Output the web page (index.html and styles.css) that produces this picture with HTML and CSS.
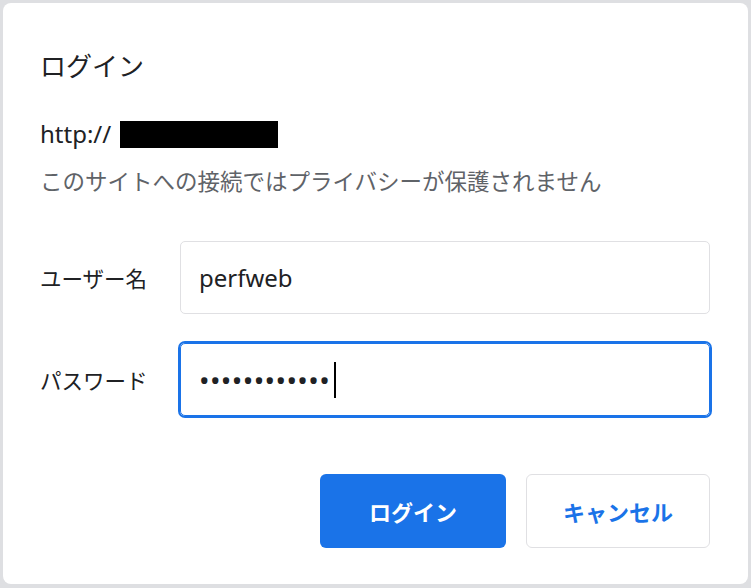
FILE: index.html
```html
<!DOCTYPE html>
<html lang="ja">
<head>
  <meta charset="UTF-8">
  <title>ログイン</title>
  <link rel="stylesheet" href="styles.css">
</head>
<body>
  <div class="dialog">
    <h1 class="dialog-title">ログイン</h1>
    <div class="site-url">http://<span class="redacted"></span></div>
    <div class="site-note">このサイトへの接続ではプライバシーが保護されません</div>

    <div class="form">
      <label class="field-label">ユーザー名</label>
      <div class="field">perfweb</div>
      <label class="field-label">パスワード</label>
      <div class="field field-focused"><span class="dots">••••••••••••</span><span class="caret"></span></div>
    </div>

    <div class="actions">
      <button class="btn btn-primary">ログイン</button>
      <button class="btn btn-secondary">キャンセル</button>
    </div>
  </div>
</body>
</html>
```

FILE: styles.css
```css
body {
  margin: 0;
  padding: 3px;
  background: #dedfe2;
  font-family: "Noto Sans", "Noto Sans CJK JP", sans-serif;
  color: #202124;
}
/* Диалог */
.dialog {
  width: 745px;
  height: 581px;
  box-sizing: border-box;
  background: #fff;
  border-radius: 8px;
  padding: 45px 38px 0 37px;
}
.dialog-title {
  margin: 0;
  font-size: 26px;
  font-weight: 400;
  line-height: 36px;
}
.site-url {
  margin-top: 35px;
  font-size: 24px;
  line-height: 30px;
  display: flex;
  align-items: center;
}
.redacted {
  display: inline-block;
  width: 158px;
  height: 27px;
  background: #000;
  margin-left: 9px;
}
.site-note {
  margin-top: 18px;
  font-size: 22.5px;
  line-height: 30px;
  color: #5f6368;
}
/* Поля */
.form {
  display: grid;
  grid-template-columns: 140px 1fr;
  row-gap: 29px;
  align-items: center;
  margin-top: 44px;
}
.field-label {
  font-size: 21.5px;
}
.field {
  height: 73px;
  box-sizing: border-box;
  border: 1px solid #e0e0e3;
  border-radius: 5px;
  padding: 0 18px;
  font-size: 24px;
  display: flex;
  align-items: center;
}
.field-focused {
  border-color: #1a73e8;
  box-shadow: 0 0 0 2px #1a73e8;
}
.dots {
  font-size: 28px;
  letter-spacing: 0.4px;
}
.caret {
  display: inline-block;
  width: 1.5px;
  height: 36px;
  background: #000;
  margin-left: 4px;
}
/* Кнопки */
.actions {
  display: flex;
  justify-content: flex-end;
  gap: 20px;
  margin-top: 58px;
}
.btn {
  height: 74px;
  border-radius: 6px;
  font-family: inherit;
  font-size: 22px;
  font-weight: 700;
  cursor: pointer;
}
.btn-primary {
  width: 186px;
  background: #1a73e8;
  border: none;
  color: #fff;
}
.btn-secondary {
  width: 184px;
  background: #fff;
  border: 1px solid #e0e0e3;
  color: #1a73e8;
}
```
